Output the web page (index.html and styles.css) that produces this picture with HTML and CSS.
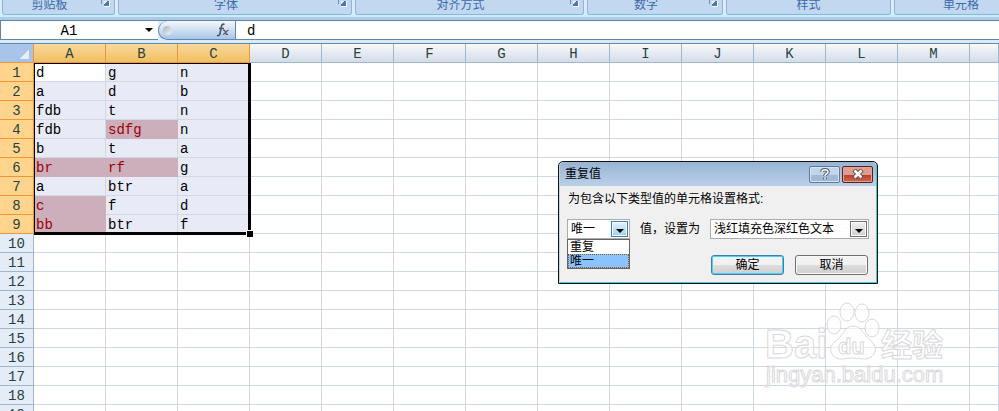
FILE: index.html
```html
<!DOCTYPE html>
<html lang="zh-CN">
<head>
    <meta charset="UTF-8">
    <meta name="viewport" content="width=device-width, initial-scale=1.0">
    <title>重复值</title>
    <link rel="stylesheet" href="styles.css">
</head>
<body>
    <div class="ribbon">
      <div class="group clipboard"><span>剪贴板</span><button class="launcher" aria-label="剪贴板"></button></div>
      <div class="group font"><span>字体</span><button class="launcher" aria-label="字体"></button></div>
      <div class="group align"><span>对齐方式</span><button class="launcher" aria-label="对齐方式"></button></div>
      <div class="group number"><span>数字</span><button class="launcher" aria-label="数字"></button></div>
      <div class="group style"><span>样式</span></div>
      <div class="group cells"><span>单元格</span></div>
    </div>

    <div class="formula-bar">
      <div class="name-box">
        <input type="text" value="A1" aria-label="名称框">
        <i class="arrow"></i>
      </div>
      <div class="fx">
        <i class="knob"></i>
        <svg width="14" height="14" viewBox="0 0 14 14" fill="none" stroke="#4c5561">
          <path d="M8.500 1.500C6.500 0.500 5.700 2 5.300 4L4 10.500C3.600 12.500 2.500 13 1 12.300M3 5.500H8" stroke-width="1.600"/>
          <path d="M7 7.500C8.500 6.500 9 8 9.500 9.500S10.500 12 12 11M12.500 7.500C10.500 7 9.500 11.500 7 11.300" stroke-width="1.300"/>
        </svg>
      </div>
      <input class="formula" type="text" value="d" aria-label="编辑栏">
    </div>

    <div class="sheet">
      <table id="grid">
        <thead></thead>
        <tbody></tbody>
      </table>
      <div class="selection"></div>
      <svg class="watermark" width="184" height="92" viewBox="0 0 184 92">
        <g class="outline">
          <text class="logo" x="3" y="58">Bai</text>
          <ellipse cx="72" cy="25" rx="7" ry="9"/>
          <ellipse cx="85" cy="12" rx="7" ry="9"/>
          <ellipse cx="100" cy="13" rx="7" ry="9"/>
          <ellipse cx="110" cy="28" rx="7" ry="9"/>
          <path d="M91 26C83 26 82 34 76 39C69 44 67 49 70 54C75 62 83 58 91 58S107 62 112 54C115 49 113 44 107 39C101 34 99 26 91 26Z"/>
          <text class="du" x="76" y="54">du</text>
          <text class="cn" x="119" y="56">经验</text>
          <text class="url" x="4" y="82">jingyan.baidu.com</text>
        </g>
      </svg>
    </div>

    <div class="dialog" role="dialog" aria-labelledby="dialogTitle">
      <div class="title-bar">
        <span id="dialogTitle">重复值</span>
        <button class="help" aria-label="帮助">
          <svg width="12" height="12" viewBox="0 0 12 12" fill="none">
            <path d="M3 4C3 1 9 1 9 4C9 6 6 5.500 6 8M6 9.500V11.500" stroke="#465a75" stroke-width="3.500"/>
            <path d="M3 4C3 1 9 1 9 4C9 6 6 5.500 6 8M6 9.500V11.500" stroke="#fff" stroke-width="1.500"/>
          </svg>
        </button>
        <button class="close" aria-label="关闭">
          <svg width="12" height="10" viewBox="0 0 12 10" fill="none">
            <path d="M2 1L10 9M10 1L2 9" stroke="#5c4a58" stroke-width="4.500"/>
            <path d="M2.500 1.500L9.500 8.500M9.500 1.500L2.500 8.500" stroke="#fff" stroke-width="2.500"/>
          </svg>
        </button>
      </div>
      <div class="dialog-body">
        <p>为包含以下类型值的单元格设置格式:</p>
        <div class="fields">
          <div class="combo kind open">
            <select id="kind" aria-label="类型">
              <option>重复</option>
              <option selected>唯一</option>
            </select>
            <i class="drop"></i>
            <ul class="menu">
              <li>重复</li>
              <li class="active">唯一</li>
            </ul>
          </div>
          <label for="format">值，设置为</label>
          <div class="combo format">
            <select id="format">
              <option>浅红填充色深红色文本</option>
            </select>
            <i class="drop"></i>
          </div>
        </div>
        <div class="actions">
          <button class="ok">确定</button>
          <button>取消</button>
        </div>
      </div>
    </div>

    <script>
        const columns = ['A', 'B', 'C', 'D', 'E', 'F', 'G', 'H', 'I', 'J', 'K', 'L', 'M', ''];
        const data = [
          ['d', 'g', 'n'],
          ['a', 'd', 'b'],
          ['fdb', 't', 'n'],
          ['fdb', 'sdfg', 'n'],
          ['b', 't', 'a'],
          ['br', 'rf', 'g'],
          ['a', 'btr', 'a'],
          ['c', 'f', 'd'],
          ['bb', 'btr', 'f']
        ];
        const rowCount = 19;
        const values = data.flat();
        const grid = document.getElementById('grid');

        // Header row
        const head = grid.tHead.insertRow();
        head.innerHTML = '<th class="corner"></th>' + columns.map((name, i) =>
          `<th class="${i < 3 ? 'picked' : ''}">${name}</th>`).join('');

        // Cells, unique values are highlighted
        for (let r = 0; r < rowCount; r++) {
          const row = grid.tBodies[0].insertRow();
          let html = `<th class="${r < data.length ? 'picked' : ''}">${r + 1}</th>`;
          columns.forEach((_, c) => {
            const value = data[r] && data[r][c] || '';
            let cls = value ? 'selected' : '';
            if (value && values.filter(v => v === value).length === 1) cls += ' unique';
            if (r === 0 && c === 0) cls = 'current';
            html += `<td class="${cls}">${value}</td>`;
          });
          row.innerHTML = html;
        }
    </script>
</body>
</html>
```
FILE: styles.css
```css
* {
  box-sizing: border-box;
}

body {
  margin: 0;
  height: 100vh;
  overflow: hidden;
  display: flex;
  flex-direction: column;
  position: relative;
  background: #fff;
  font: 12px/16px "Liberation Sans", "Noto Sans CJK SC", sans-serif;
}

button, input, select {
  font: inherit;
  margin: 0;
  padding: 0;
  border: none;
  border-radius: 0;
  outline: none;
}

/* Ribbon */
.ribbon {
  display: flex;
  flex: none;
  gap: 3px;
  height: 21px;
  padding: 0 0 5px 2px;
  overflow: hidden;
  background: linear-gradient(#dcebfa 0 15px, #c4effc 15px 17px, #b0c8e6 17px 20px, #5b86ad 20px);
}

.group {
  flex: none;
  display: flex;
  height: 15px;
  border: 1px solid #8db4de;
  border-top: none;
  border-radius: 0 0 3px 3px;
  background: #c1d8f0;
  color: #3e6aaa;
}

.group span {
  flex: 1;
  text-align: center;
  line-height: 11px;
}

.clipboard { width: 113px; }
.font { width: 234px; }
.align { width: 229px; }
.number { width: 136px; }
.style { width: 165px; }
.cells { width: 134px; }

.launcher {
  position: relative;
  width: 18px;
  height: 8px;
  background: none;
}

.launcher::before {
  content: "";
  position: absolute;
  left: 5px;
  top: 0;
  width: 3px;
  height: 4px;
  border-left: 1px solid #6f91b8;
}

.launcher::after {
  content: "";
  position: absolute;
  left: 8px;
  top: 1px;
  width: 5px;
  height: 5px;
  border: 1px solid #fff;
  border-width: 0 1px 1px 0;
  background: linear-gradient(135deg, #e8f1fa 35%, #4f79a8 35%);
}

/* Formula bar */
.formula-bar {
  display: flex;
  flex: none;
  height: 23px;
  padding-bottom: 3px;
  border-bottom: 1px solid #5f88ae;
  background: #dcebf7;
  font-family: "Liberation Mono", monospace;
  font-size: 14px;
}

.name-box {
  flex: none;
  display: flex;
  align-items: center;
  width: 158px;
  border: 1px solid #5f88ae;
  border-width: 0 0 1px 1px;
  background: #fff;
}

.name-box input {
  width: 136px;
  height: 18px;
  padding-top: 2px;
  text-align: center;
  background: none;
}

.arrow {
  margin-left: 8px;
  border: 4px solid transparent;
  border-top-color: #000;
  border-bottom: none;
}

.fx {
  flex: none;
  display: flex;
  align-items: center;
  justify-content: space-between;
  width: 78px;
  padding: 0 5px 0 4px;
  border: 1px solid #5f88ae;
  border-top: none;
  border-radius: 10px 0 0 10px;
  background: linear-gradient(#f4f8fd, #a9c5e8);
}

.knob {
  width: 9px;
  height: 9px;
  border-radius: 50%;
  background: linear-gradient(135deg, #a8b2c0, #f3f5f8);
}

.formula {
  flex: 1;
  min-width: 0;
  padding: 2px 0 0 11px;
  border-bottom: 1px solid #5f88ae;
  background: #fff;
}

/* Sheet */
.sheet {
  flex: 1;
  min-height: 0;
  position: relative;
  overflow: hidden;
}

table {
  width: 100%;
  table-layout: fixed;
  border-collapse: separate;
  border-spacing: 0;
  font: 14px/16px "Liberation Mono", monospace;
}

th, td {
  height: 19px;
  padding: 2px 0 0 2px;
  border: 1px solid #d0d7e5;
  border-width: 0 1px 1px 0;
  text-align: left;
  white-space: nowrap;
}

th {
  padding-left: 0;
  border-color: #9eb6ce;
  background: #e4ecf7;
  color: #27413e;
  font-weight: normal;
  text-align: center;
}

thead th {
  width: 72px;
  background: linear-gradient(#f8fafc, #d4dce9);
}

thead th:last-child {
  width: auto;
}

th.picked {
  border-color: #f29536;
  background: #ffd58d;
}

thead th.picked {
  background: linear-gradient(#f9d99f, #f1bf5f);
}

thead .corner {
  width: 34px;
  border-color: #f29536;
  background: linear-gradient(135deg, transparent 50%, #e9eef6 50%) 20px 5px / 9px 10px no-repeat, #a9c4e9;
}

.selected {
  background: #e8eaf5;
}

.unique {
  border-color: #ccafbb;
  background: #ccafbb;
  color: #9c0006;
}

/* Frame around A1:C9 */
.selection {
  position: absolute;
  left: 34px;
  top: 19px;
  width: 217px;
  height: 172px;
  border: 1px solid #000;
  border-width: 1px 3px 3px 1px;
}

.selection::after {
  content: "";
  position: absolute;
  right: -5px;
  bottom: -5px;
  width: 6px;
  height: 6px;
  border: 1px solid #fff;
  border-width: 1px 0 0 1px;
  background: #000;
}

.watermark {
  position: absolute;
  right: 53px;
  bottom: 19px;
}

.outline {
  fill: #fff;
  fill-opacity: 0.6;
  stroke: #d9d9dc;
  stroke-width: 1px;
}

.logo {
  font: bold 40px "Liberation Sans", sans-serif;
}

.du {
  font: bold 22px "Liberation Sans", sans-serif;
}

.cn {
  font: bold 31px "Noto Sans CJK SC", sans-serif;
}

.url {
  font: 22px "Liberation Sans", sans-serif;
}

/* Dialog */
.dialog {
  position: absolute;
  left: 558px;
  top: 161px;
  width: 320px;
  border: 1px solid #111;
  border-radius: 5px 5px 0 0;
  background: #f0f0f0;
  box-shadow: inset 1px 0 #b9d9f2, inset -1px -1px #35cde8;
}

.title-bar {
  display: flex;
  align-items: center;
  height: 24px;
  margin: 0 1px;
  padding: 0 3px 0 5px;
  border-radius: 4px 4px 0 0;
  background: linear-gradient(#98b4d2, #bad0ea);
}

.title-bar span {
  flex: 1;
}

.title-bar button {
  display: flex;
  align-items: center;
  justify-content: center;
  width: 31px;
  height: 17px;
  margin-left: 2px;
  border: 1px solid #60799a;
  border-radius: 2px;
  background: linear-gradient(#c3d5e9 50%, #9fb9d6 50%);
  box-shadow: inset 0 0 0 1px #d5e3f2;
}

.title-bar .close {
  border-color: #5a1c1c;
  background: linear-gradient(#dd9d90 50%, #b83c26 50%, #cf6b50);
  box-shadow: inset 0 0 0 1px #e2a497;
}

.dialog-body {
  padding: 5px 8px 8px;
}

.dialog p {
  margin: 0 0 12px 1px;
}

.fields {
  display: flex;
  align-items: center;
  height: 20px;
}

.fields label {
  margin: 0 10px;
}

.combo {
  position: relative;
}

.combo select {
  display: block;
  appearance: none;
  width: 100%;
  height: 20px;
  padding: 0 18px 0 3px;
  border: 1px solid #abadb3;
  background: #fff;
  color: #000;
}

.kind { width: 63px; }
.format { width: 159px; }

.drop {
  position: absolute;
  right: 2px;
  top: 2px;
  width: 17px;
  height: 16px;
  border: 1px solid #707070;
  background: linear-gradient(#f2f2f2, #cfcfcf);
  box-shadow: inset 0 0 0 1px #fff;
  pointer-events: none;
}

.drop::after {
  content: "";
  position: absolute;
  left: 4px;
  top: 7px;
  border: 4px solid transparent;
  border-top-color: #000;
  border-bottom: none;
}

.open .drop {
  border-color: #3c7fb1;
  background: linear-gradient(#e5f4fc, #98d1ef);
}

.menu {
  position: absolute;
  left: 0;
  top: 20px;
  width: 100%;
  margin: 0;
  padding: 0;
  border: 1px solid #646464;
  background: #fff;
  list-style: none;
}

.menu li {
  height: 14px;
  padding-left: 2px;
  line-height: 14px;
}

.menu .active {
  outline: 1px dotted #8a5a20;
  outline-offset: -1px;
  background: #8ac3ff;
}

.actions {
  display: flex;
  justify-content: flex-end;
  gap: 11px;
  margin: 16px 1px 0 0;
}

.actions button {
  width: 73px;
  height: 20px;
  border: 1px solid #707070;
  border-radius: 3px;
  background: linear-gradient(#f2f2f2 50%, #dddddd 50%, #cfcfcf);
  box-shadow: inset 0 0 0 1px #fafafa;
  line-height: 16px;
}

.actions .ok {
  border-color: #3c7fb1;
  box-shadow: inset 0 0 0 1px #48d0f5;
}
```
